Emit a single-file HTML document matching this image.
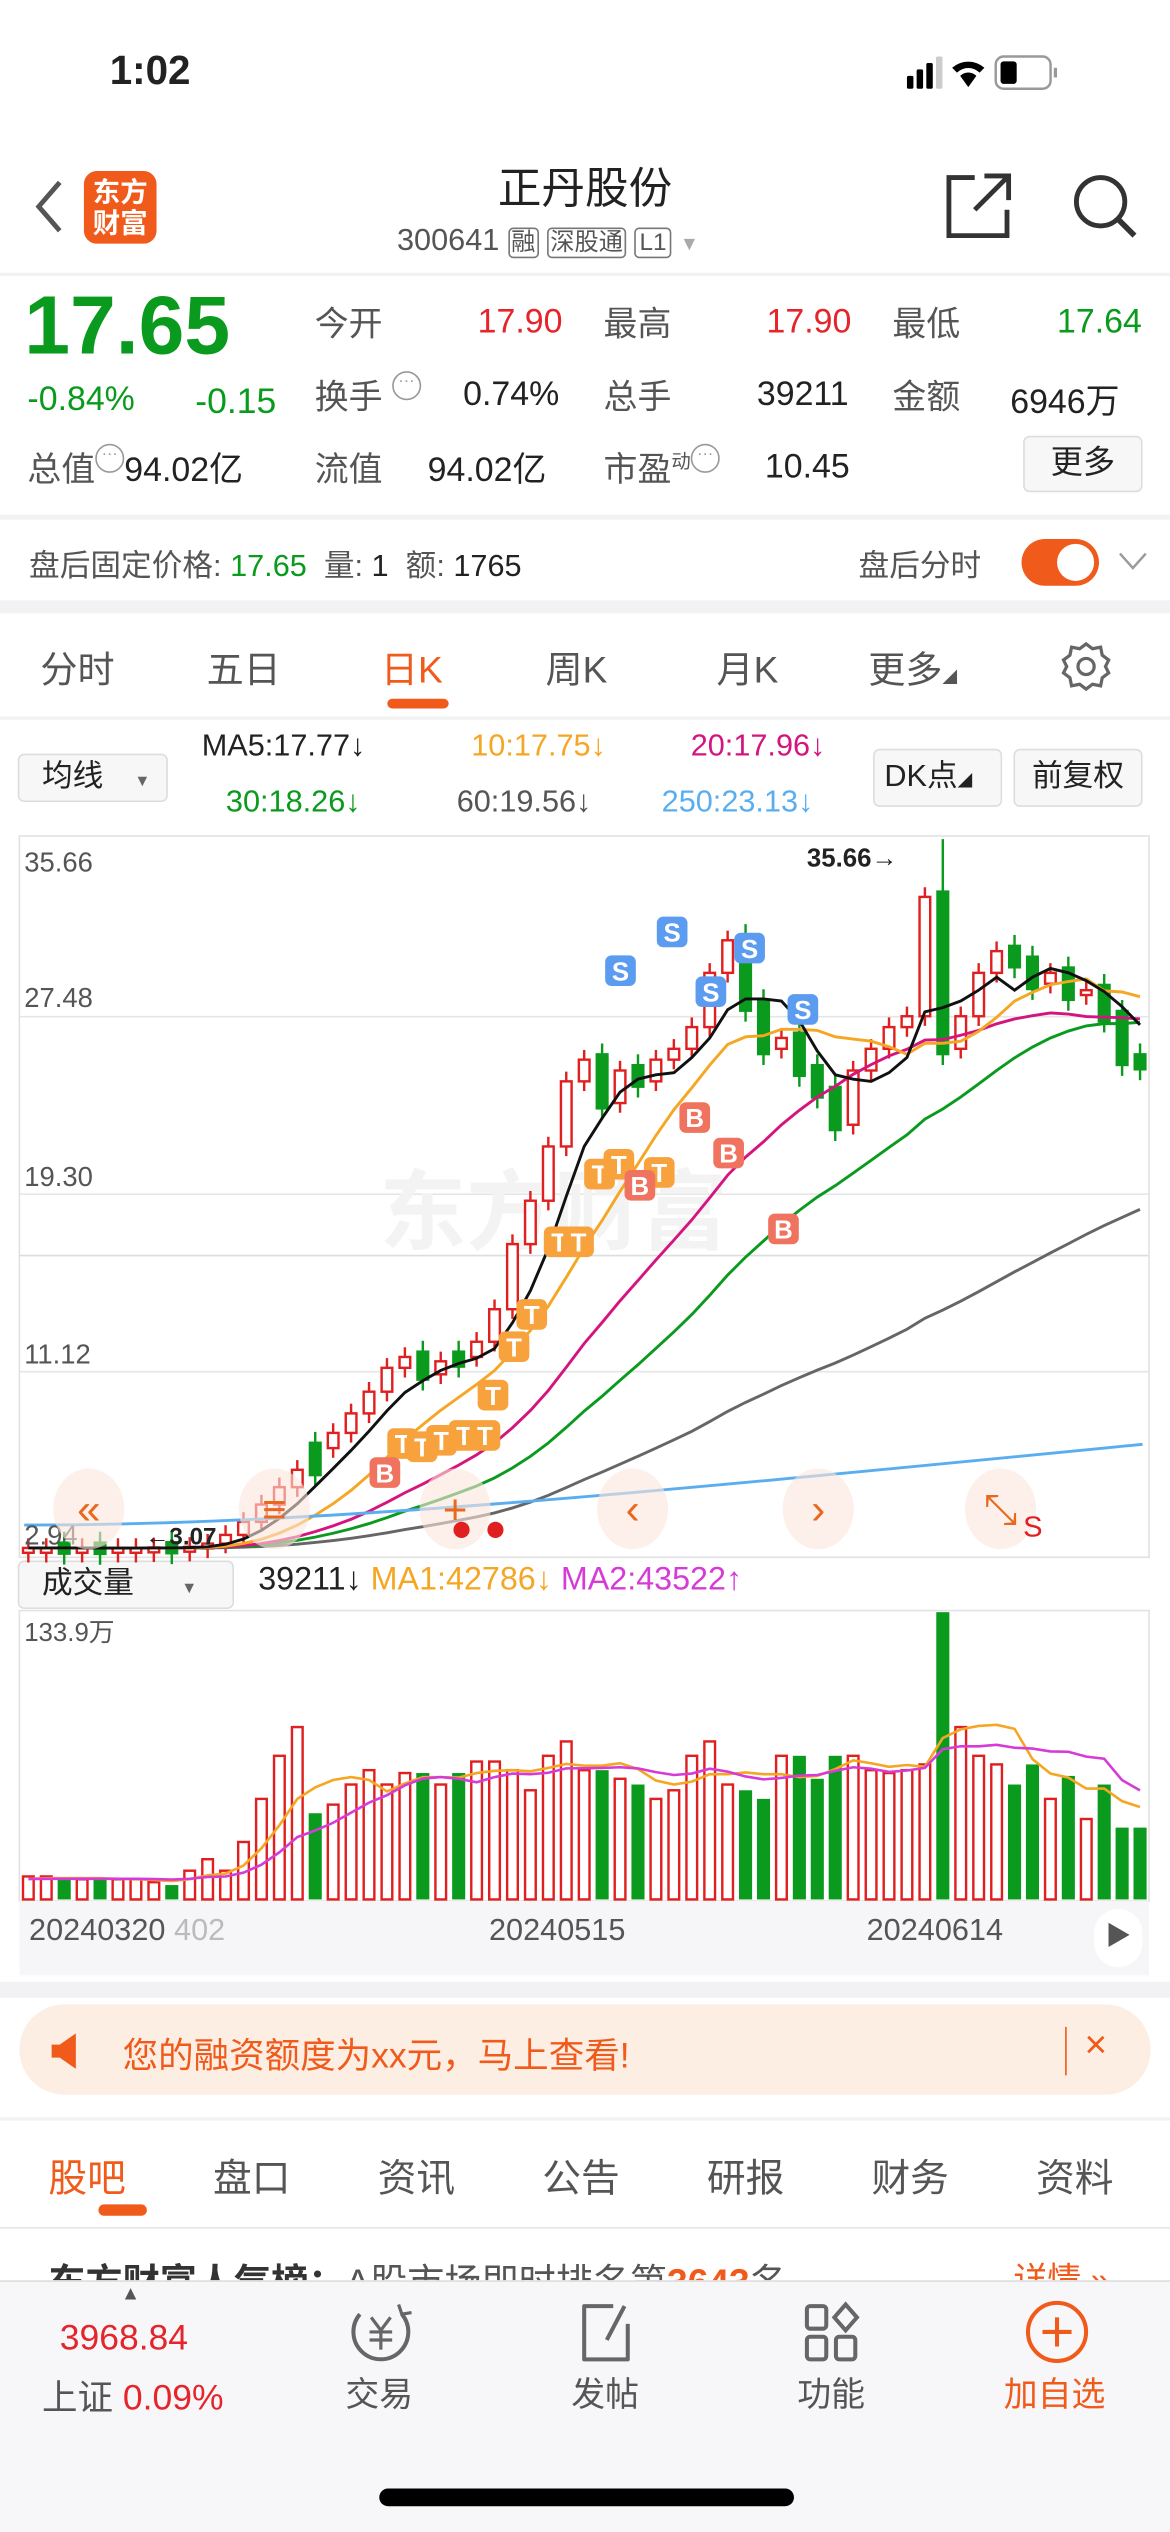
<!DOCTYPE html><html><head><meta charset="utf-8"><style>
*{margin:0;padding:0;box-sizing:border-box}
html,body{width:1170px;height:2532px;overflow:hidden;background:#fff}
#w{position:absolute;left:0;top:0;width:725px;height:1569px;transform:scale(1.61379);transform-origin:0 0;font-family:"Liberation Sans","Noto Sans CJK SC",sans-serif;color:#333}
.a{position:absolute;white-space:nowrap}
.g{color:#0a9a1e}.r{color:#e4252c}.k{color:#222}.gr{color:#555}
.n{padding-top:3px}
.band{position:absolute;left:0;width:725px;background:#f2f2f4}
.dots{display:inline-block;width:18px;height:18px;border:1.5px solid #999;border-radius:50%;font-size:10px;line-height:12px;text-align:center;color:#999;vertical-align:top}
</style></head><body><div id="w">
<div class="a k" style="left:68px;top:30px;font-size:25px;font-weight:bold">1:02</div>
<svg class="a" style="left:560px;top:34px" width="140" height="24"><rect x="2" y="13" width="4" height="8" rx="1" fill="#000"/><rect x="8" y="9" width="4" height="12" rx="1" fill="#000"/><rect x="14" y="5" width="4" height="16" rx="1" fill="#000"/><rect x="20" y="1" width="4" height="20" rx="1" fill="#ccc"/><path d="M30 8a15 15 0 0 1 20 0l-3 3a10 10 0 0 0-14 0zM35 13a7 7 0 0 1 10 0l-5 7z" fill="#000"/><rect x="57" y="1" width="34" height="20" rx="5" fill="none" stroke="#999" stroke-width="1.5"/><rect x="60" y="4" width="10" height="14" rx="2" fill="#000"/><rect x="93" y="8" width="2" height="6" fill="#999"/></svg>
<svg class="a" style="left:18px;top:110px" width="24" height="36"><path d="M19 3L6 18l13 15" fill="none" stroke="#555" stroke-width="3"/></svg>
<div class="a" style="left:52px;top:106px;width:45px;height:45px;background:#f05a1a;border-radius:8px;color:#fff;font-size:17px;font-weight:bold;line-height:19px;text-align:center;padding-top:4px">东方<br>财富</div>
<div class="a k" style="left:0;width:725px;text-align:center;top:95px;font-size:27px">正丹股份</div>
<div class="a gr" style="left:246px;top:139px;font-size:19px">300641 <span style="border:1px solid #777;border-radius:3px;font-size:15px;padding:0 1px">融</span> <span style="border:1px solid #777;border-radius:3px;font-size:15px;padding:0 1px">深股通</span> <span style="border:1px solid #777;border-radius:3px;font-size:15px;padding:0 2px">L1</span> <span style="color:#aaa;font-size:12px">▼</span></div>
<svg class="a" style="left:584px;top:106px" width="44" height="44"><path d="M20 4H4v36h36V24" fill="none" stroke="#333" stroke-width="3"/><path d="M26 3h15v15M41 3L20 24" fill="none" stroke="#333" stroke-width="3"/></svg>
<svg class="a" style="left:663px;top:106px" width="44" height="44"><circle cx="19" cy="19" r="15" fill="none" stroke="#333" stroke-width="3"/><path d="M30 30l10 10" stroke="#333" stroke-width="3.5"/></svg>
<div class="band" style="top:169px;height:2px"></div>
<div class="a g" style="left:15px;top:172px;font-size:51px;font-weight:bold">17.65</div>
<div class="a g" style="left:17px;top:236px;font-size:21px">-0.84%</div>
<div class="a g" style="left:121px;top:236px;font-size:22px">-0.15</div>
<div class="a gr" style="left:195px;top:185px;font-size:21px">今开</div><div class="a r n" style="left:296px;top:185px;font-size:21px">17.90</div>
<div class="a gr" style="left:374px;top:185px;font-size:21px">最高</div><div class="a r n" style="left:475px;top:185px;font-size:21px">17.90</div>
<div class="a gr" style="left:553px;top:185px;font-size:21px">最低</div><div class="a g n" style="left:655px;top:185px;font-size:21px">17.64</div>
<div class="a gr" style="left:195px;top:230px;font-size:21px">换手 <span class="dots">···</span></div><div class="a k n" style="left:287px;top:230px;font-size:21px">0.74%</div>
<div class="a gr" style="left:374px;top:230px;font-size:21px">总手</div><div class="a k n" style="left:469px;top:230px;font-size:21px">39211</div>
<div class="a gr" style="left:553px;top:230px;font-size:21px">金额</div><div class="a k n" style="left:626px;top:230px;font-size:21px">6946万</div>
<div class="a gr" style="left:17px;top:275px;font-size:21px">总值<span class="dots">···</span><span class="k">94.02亿</span></div>
<div class="a gr" style="left:195px;top:275px;font-size:21px">流值</div><div class="a k" style="left:265px;top:275px;font-size:21px">94.02亿</div>
<div class="a gr" style="left:374px;top:275px;font-size:21px">市盈<sup style="font-size:12px">动</sup><span class="dots">···</span></div><div class="a k n" style="left:474px;top:275px;font-size:21px">10.45</div>
<div class="a k" style="left:634px;top:270px;width:74px;height:35px;border:1px solid #ddd;border-radius:4px;background:#f7f7f7;font-size:20px;text-align:center;line-height:33px">更多</div>
<div class="band" style="top:319px;height:3px"></div>
<div class="a gr" style="left:18px;top:336px;font-size:19px">盘后固定价格: <span class="g">17.65</span>&nbsp; 量: <span class="k">1</span>&nbsp; 额: <span class="k">1765</span></div>
<div class="a gr" style="left:532px;top:336px;font-size:19px">盘后分时</div>
<div class="a" style="left:633px;top:334px;width:48px;height:29px;border-radius:15px;background:#f05a1a"></div>
<div class="a" style="left:655px;top:337px;width:23px;height:23px;border-radius:50%;background:#fff"></div>
<svg class="a" style="left:692px;top:341px" width="20" height="14"><path d="M2 2l8 9 8-9" fill="none" stroke="#999" stroke-width="1.5"/></svg>
<div class="band" style="top:372px;height:8px"></div>
<div class="a gr" style="left:25px;top:396px;font-size:23px">分时</div>
<div class="a gr" style="left:128px;top:396px;font-size:23px">五日</div>
<div class="a" style="left:236px;top:396px;font-size:23px;color:#f05a1a">日K</div>
<div class="a" style="left:240px;top:433px;width:38px;height:6px;border-radius:3px;background:#f05a1a"></div>
<div class="a gr" style="left:338px;top:396px;font-size:23px">周K</div>
<div class="a gr" style="left:444px;top:396px;font-size:23px">月K</div>
<div class="a gr" style="left:538px;top:396px;font-size:23px">更多<span style="font-size:9px">◢</span></div>
<svg class="a" style="left:656px;top:396px" width="34" height="34"><path d="M17 3l4 3 5-1 1 5 4 3-2 4 2 4-4 3-1 5-5-1-4 3-4-3-5 1-1-5-4-3 2-4-2-4 4-3 1-5 5 1z" fill="none" stroke="#666" stroke-width="2"/><circle cx="17" cy="17" r="5" fill="none" stroke="#666" stroke-width="2"/></svg>
<div class="band" style="top:444px;height:2px"></div>
<div class="a k" style="left:11px;top:467px;width:93px;height:30px;border:1px solid #ddd;border-radius:4px;background:#f7f7f7;font-size:19px;line-height:28px;padding-left:14px">均线 <span style="font-size:10px;color:#666;margin-left:14px">▼</span></div>
<div class="a" style="left:125px;top:452px;font-size:19px;color:#222">MA5:17.77↓</div>
<div class="a" style="left:292px;top:452px;font-size:19px;color:#f5a623">10:17.75↓</div>
<div class="a" style="left:428px;top:452px;font-size:19px;color:#d4157f">20:17.96↓</div>
<div class="a" style="left:140px;top:487px;font-size:19px;color:#0a9a1e">30:18.26↓</div>
<div class="a" style="left:283px;top:487px;font-size:19px;color:#555">60:19.56↓</div>
<div class="a" style="left:410px;top:487px;font-size:19px;color:#5aaef0">250:23.13↓</div>
<div class="a k" style="left:541px;top:464px;width:80px;height:36px;border:1px solid #ddd;border-radius:4px;background:#f7f7f7;font-size:19px;line-height:34px;padding-left:6px">DK点<span style="font-size:9px">◢</span></div>
<div class="a k" style="left:628px;top:464px;width:80px;height:36px;border:1px solid #ddd;border-radius:4px;background:#f7f7f7;font-size:19px;line-height:34px;text-align:center">前复权</div>
<div class="a k" style="left:11px;top:967px;width:134px;height:30px;border:1px solid #ddd;border-radius:4px;background:#f7f7f7;font-size:19px;line-height:28px;padding-left:14px">成交量 <span style="font-size:10px;color:#666;margin-left:24px">▼</span></div>
<div class="a k" style="left:160px;top:968px;font-size:20px">39211↓ <span style="color:#f5a623">MA1:42786↓</span> <span style="color:#d63bd6">MA2:43522↑</span></div>
<svg id="ch" class="a" style="left:0;top:0" width="725" height="1230"></svg>
<div class="a" style="left:12px;top:1178px;width:700px;height:46px;background:#f6f6f8"></div>
<div class="a gr" style="left:18px;top:1186px;font-size:19px">20240320 <span style="color:#bbb">402</span></div>
<div class="a gr" style="left:303px;top:1186px;font-size:19px">20240515</div>
<div class="a gr" style="left:537px;top:1186px;font-size:19px">20240614</div>
<div class="a" style="left:678px;top:1183px;width:30px;height:36px;border-radius:15px;background:#fff;color:#555;font-size:16px;text-align:center;line-height:36px">▶</div>
<div class="band" style="top:1228px;height:10px"></div>
<div class="a" style="left:12px;top:1242px;width:701px;height:56px;border-radius:28px;background:#fdeee4"></div>
<svg class="a" style="left:30px;top:1259px" width="30" height="24"><path d="M2 8h5l10-7v22L7 16H2z" fill="#f05a1a"/></svg>
<div class="a" style="left:76px;top:1256px;font-size:22px;color:#f05a1a">您的融资额度为xx元，马上查看!</div>
<div class="a" style="left:660px;top:1256px;width:1px;height:30px;background:#f05a1a"></div>
<div class="a" style="left:672px;top:1254px;font-size:24px;color:#f05a1a">×</div>
<div class="band" style="top:1312px;height:2px"></div>
<div class="a" style="left:30px;top:1330px;font-size:24px;color:#f05a1a">股吧</div>
<div class="a" style="left:61px;top:1366px;width:30px;height:7px;border-radius:4px;background:#f05a1a"></div>
<div class="a gr" style="left:132px;top:1330px;font-size:24px">盘口</div>
<div class="a gr" style="left:234px;top:1330px;font-size:24px">资讯</div>
<div class="a gr" style="left:336px;top:1330px;font-size:24px">公告</div>
<div class="a gr" style="left:438px;top:1330px;font-size:24px">研报</div>
<div class="a gr" style="left:540px;top:1330px;font-size:24px">财务</div>
<div class="a gr" style="left:642px;top:1330px;font-size:24px">资料</div>
<div class="band" style="top:1380px;height:1px;background:#e5e5e5"></div>
<div class="a" style="left:30px;top:1395px;height:18px;overflow:hidden;font-size:23px;line-height:38px"><b>东方财富人气榜：</b><span class="gr">A股市场即时排名第</span><b style="color:#f05a1a">3643</b><span class="gr">名</span></div>
<div class="a" style="left:628px;top:1395px;height:18px;overflow:hidden;font-size:21px;line-height:38px;color:#f05a1a">详情 »</div>
<div class="a" style="left:0;top:1413px;width:725px;height:156px;background:#f7f7f9;border-top:1px solid #ddd"></div>
<div class="a gr" style="left:75px;top:1414px;font-size:12px">▲</div>
<div class="a r" style="left:37px;top:1436px;font-size:22px">3968.84</div>
<div class="a gr" style="left:26px;top:1468px;font-size:22px">上证 <span class="r">0.09%</span></div>
<svg class="a" style="left:215px;top:1426px" width="44" height="40"><path d="M8 8A17 17 0 1 0 34 8" fill="none" stroke="#666" stroke-width="2.5"/><path d="M32 2l2 6 6-1" fill="none" stroke="#666" stroke-width="2"/><path d="M15 10l6 8 6-8M21 18v12M14 19h14M14 24h14" fill="none" stroke="#666" stroke-width="2"/></svg>
<div class="a gr" style="left:214px;top:1468px;font-size:21px">交易</div>
<svg class="a" style="left:356px;top:1426px" width="40" height="40"><path d="M24 3H6v33h27V14" fill="none" stroke="#666" stroke-width="2.5" stroke-linejoin="round"/><path d="M31 3L20 24" stroke="#666" stroke-width="2.5"/></svg>
<div class="a gr" style="left:354px;top:1468px;font-size:21px">发帖</div>
<svg class="a" style="left:496px;top:1426px" width="40" height="40"><rect x="4" y="3" width="12" height="14" rx="2" fill="none" stroke="#666" stroke-width="2.5"/><path d="M28 2l7 8-7 8-7-8z" fill="none" stroke="#666" stroke-width="2.5"/><rect x="4" y="22" width="12" height="14" rx="2" fill="none" stroke="#666" stroke-width="2.5"/><rect x="22" y="22" width="12" height="14" rx="2" fill="none" stroke="#666" stroke-width="2.5"/></svg>
<div class="a gr" style="left:494px;top:1468px;font-size:21px">功能</div>
<svg class="a" style="left:634px;top:1424px" width="42" height="42"><circle cx="21" cy="21" r="18" fill="none" stroke="#f05a1a" stroke-width="2.5"/><path d="M21 12v18M12 21h18" stroke="#f05a1a" stroke-width="2.5"/></svg>
<div class="a" style="left:622px;top:1468px;font-size:21px;color:#f05a1a">加自选</div>
<div class="a" style="left:235px;top:1542px;width:257px;height:11px;border-radius:6px;background:#000"></div>
</div>
<script>
var s='',L=12,R=712,N=63,st=(R-L)/N;
function Y(p){return 520+(35.66-p)/8.18*110}
var C=[3,3,2.98,3,2.97,3,3,3.02,3,3.05,3.2,3.6,4.2,5,5.8,6.6,7.6,8.3,9.2,10.2,11.3,11.8,11,11.6,11.8,12.5,14,17,19,21.5,24.5,25.5,23.5,25,24.5,25.5,26,27,29.5,31,28,26,26.5,25,24,22.5,25,26,27,27.5,33,26,27.5,29.5,30.5,30,29,29.5,28.5,28.7,27.5,25.5,25.3];
var V=[.08,.08,.07,.07,.07,.07,.07,.06,.05,.1,.14,.1,.2,.35,.5,.6,.3,.33,.4,.45,.4,.44,.44,.4,.44,.48,.48,.45,.38,.5,.55,.45,.45,.42,.4,.35,.38,.5,.55,.4,.38,.35,.5,.5,.42,.5,.5,.45,.44,.45,.47,1,.6,.5,.47,.4,.47,.35,.43,.28,.4,.25,.25];
[630,740,850].forEach(function(y){s+='<line x1="12" x2="712" y1="'+y+'" y2="'+y+'" stroke="#e6e6e6"/>'});
s+='<line x1="12" x2="712" y1="778" y2="778" stroke="#ddd"/>';
s+='<rect x="12" y="518" width="700" height="447" fill="none" stroke="#e2e2e2"/>';
s+='<rect x="12" y="998" width="700" height="180" fill="none" stroke="#e2e2e2"/>';
s+='<text x="235" y="770" font-size="54" fill="#f3f3f3" font-weight="bold">东方财富</text>';
for(var i=0;i<N;i++){var c=C[i],o=i?C[i-1]:c,u=c>=o;if(i==32||i==40||i==41||i==43||i==45||i==51||i==60||i==22||i==16||i==24)u=false;
var x=L+i*st+1.5,w=st-3,hi=Math.max(o,c),lo=Math.min(o,c);if(!u){hi=Math.max(o,c)+.3;lo=Math.min(o,c)-0.3;}
var y1=Y(hi),y2=Y(lo);if(y2-y1<3)y2=y1+3;var col=u?'#e02020':'#0a9a1e';var wt=(i==51)?Y(35.66):y1-6;
s+='<line x1="'+(x+w/2)+'" x2="'+(x+w/2)+'" y1="'+wt+'" y2="'+(y2+6)+'" stroke="'+col+'" stroke-width="1.5"/>';
s+=u?'<rect x="'+(x+.75)+'" y="'+y1+'" width="'+(w-1.5)+'" height="'+(y2-y1)+'" fill="#fff" stroke="'+col+'" stroke-width="1.5"/>':'<rect x="'+x+'" y="'+y1+'" width="'+w+'" height="'+(y2-y1)+'" fill="'+col+'"/>';
var vh=V[i]*178,vy=1177-vh;s+=u?'<rect x="'+(x+.75)+'" y="'+vy+'" width="'+(w-1.5)+'" height="'+vh+'" fill="#fff" stroke="#e02020" stroke-width="1.5"/>':'<rect x="'+x+'" y="'+vy+'" width="'+w+'" height="'+vh+'" fill="#0a9a1e"/>';}
function ma(n,col,sw){var p='';for(var i=0;i<N;i++){var t=0;for(var j=i-n+1;j<=i;j++)t+=j<0?3:C[j];p+=(i?'L':'M')+(L+i*st+st/2).toFixed(1)+' '+Y(t/n).toFixed(1);}s+='<path d="'+p+'" fill="none" stroke="'+col+'" stroke-width="'+sw+'"/>';}
ma(60,'#666',1.8);ma(30,'#0a9a1e',1.8);ma(20,'#d4157f',1.8);ma(10,'#f5a623',1.8);ma(5,'#111',1.8);
s+='<path d="M15 945 C200 945 400 925 708 895" fill="none" stroke="#5aaef0" stroke-width="1.8"/>';
function vma(n,col){var p='';for(var i=0;i<N;i++){var t=0;for(var j=i-n+1;j<=i;j++)t+=j<0?.07:V[j];p+=(i?'L':'M')+(L+i*st+st/2).toFixed(1)+' '+(1177-t/n*178).toFixed(1);}s+='<path d="'+p+'" fill="none" stroke="'+col+'" stroke-width="1.6"/>';}
vma(5,'#f5a623');vma(10,'#d63bd6');
function mk(x,y,t,c){s+='<rect x="'+x+'" y="'+y+'" width="19" height="19" rx="4" fill="'+c+'"/><text x="'+(x+9.5)+'" y="'+(y+15.5)+'" font-size="16" font-weight="bold" fill="#fff" text-anchor="middle">'+t+'</text>';}
[[240,885],[252,887],[264,883],[278,880],[291,880],[296,855],[309,825],[320,805],[337,760],[349,760],[362,718],[374,712],[399,717]].forEach(function(a){mk(a[0],a[1],'T','#f7a23c')});
[[229,903],[387,725],[421,683],[442,705],[476,752]].forEach(function(a){mk(a[0],a[1],'B','#f0735f')});
[[375,592],[407,568],[431,605],[455,578],[488,616]].forEach(function(a){mk(a[0],a[1],'S','#5b9cf0')});
s+='<text x="500" y="537" font-size="16" fill="#222" font-weight="bold">35.66→</text>';
[['35.66',540],['27.48',624],['19.30',735],['11.12',845],['2.94',957]].forEach(function(a){s+='<text x="15" y="'+a[1]+'" font-size="17" fill="#555">'+a[0]+'</text>'});
s+='<text x="15" y="1017" font-size="16" fill="#555">133.9万</text>';
[[55,"«"],[170,"≡"],[282,"+"],[392,"‹"],[507,"›"],[620,"⤡"]].forEach(function(a){s+='<ellipse cx="'+a[0]+'" cy="935" rx="22" ry="25" fill="#fbe5da" opacity=".6"/><text x="'+a[0]+'" y="944" font-size="26" fill="#e8691e" text-anchor="middle">'+a[1]+'</text>'});
s+='<circle cx="286" cy="948" r="5" fill="#e02020"/><circle cx="307" cy="948" r="5" fill="#e02020"/><text x="634" y="952" font-size="18" fill="#e02020">S</text>';
s+='<text x="90" y="957" font-size="15" fill="#222" font-weight="bold">←3.07</text>';
document.getElementById('ch').innerHTML=s;
</script></body></html>
